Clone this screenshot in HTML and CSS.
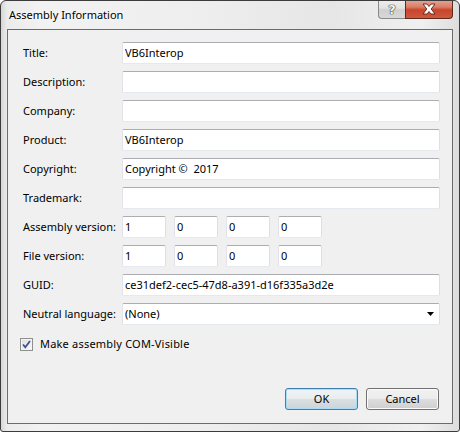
FILE: index.html
```html
<!DOCTYPE html>
<html>
<head>
<meta charset="utf-8">
<link rel="stylesheet" href="styles.css">
</head>
<body>
<div class="window">
  <div class="titlebar">
    <span class="title">Assembly Information</span>
    <div class="caption-btns">
      <div class="cbtn help"><span class="help-glyph">?</span></div>
      <div class="cbtn close">
        <svg width="16" height="12" viewBox="0 0 16 12"><path d="M2 1 H6 L8 3.5 L10 1 H14 L10.2 6 L14 11 H10 L8 8.5 L6 11 H2 L5.8 6 Z" fill="#fff" stroke="#5a2418" stroke-width="0.9" stroke-linejoin="round"/></svg>
      </div>
    </div>
  </div>
  <div class="client">
    <div class="form">
      <label class="lbl">Title:</label><div class="field">VB6Interop</div>
      <label class="lbl">Description:</label><div class="field"></div>
      <label class="lbl">Company:</label><div class="field"></div>
      <label class="lbl">Product:</label><div class="field">VB6Interop</div>
      <label class="lbl">Copyright:</label><div class="field">Copyright ©&nbsp; 2017</div>
      <label class="lbl">Trademark:</label><div class="field"></div>
      <label class="lbl">Assembly version:</label>
      <div class="versions"><div class="field ver">1</div><div class="field ver">0</div><div class="field ver">0</div><div class="field ver">0</div></div>
      <label class="lbl">File version:</label>
      <div class="versions"><div class="field ver">1</div><div class="field ver">0</div><div class="field ver">0</div><div class="field ver">0</div></div>
      <label class="lbl">GUID:</label><div class="field">ce31def2-cec5-47d8-a391-d16f335a3d2e</div>
      <label class="lbl">Neutral language:</label>
      <div class="field combo"><span>(None)</span><svg class="arrow" width="7" height="4" viewBox="0 0 7 4"><path d="M0 0 H7 L3.5 4 Z" fill="#000"/></svg></div>
    </div>
    <div class="check-row">
      <span class="checkbox"><svg width="9" height="9" viewBox="0 0 9 9"><path d="M1 4.5 L3.3 7.2 L8 1" fill="none" stroke="#3d5596" stroke-width="1.8"/></svg></span>
      <span class="check-label">Make assembly COM-Visible</span>
    </div>
    <div class="buttons">
      <button class="btn default">OK</button>
      <button class="btn">Cancel</button>
    </div>
  </div>
</div>
</body>
</html>
```
FILE: styles.css
```css
html, body {
  margin: 0;
  padding: 0;
  background: #ffffff;
}
body {
  font-family: "Noto Sans", "DejaVu Sans", sans-serif;
  font-size: 11px;
  color: #000;
}
.window {
  width: 460px;
  height: 432px;
  box-sizing: border-box;
  border: 1px solid #3c3c3c;
  border-radius: 6px 6px 3px 3px;
  background: linear-gradient(90deg, #d6d6d6 0px, #ebebeb 6px, #f2f2f2 40px, #eeeeee 200px, #e6e6e6 330px, #f0f0f0 420px, #dcdcdc 460px);
  display: flex;
  flex-direction: column;
  padding: 0 6px 7px 6px;
  overflow: hidden;
}
.titlebar {
  height: 28px;
  display: flex;
  align-items: flex-start;
  padding-left: 2px;
}
.title {
  margin-top: 6px;
  font-size: 11px;
  line-height: 16px;
  color: #000;
  text-shadow: 0 0 6px #fff, 0 0 3px #fff;
}
.caption-btns {
  margin-left: auto;
  margin-top: -1px;
  display: flex;
}
.cbtn {
  height: 19px;
  box-sizing: border-box;
  display: flex;
  align-items: center;
  justify-content: center;
}
.help {
  width: 27px;
  border: 1px solid #8a8a8a;
  border-top: none;
  border-right: none;
  border-radius: 0 0 0 4px;
  background: linear-gradient(#eeeeee 0%, #e2e2e2 45%, #cfcfcf 55%, #d8d8d8 100%);
}
.help-glyph {
  font-family: "DejaVu Sans", sans-serif;
  font-weight: bold;
  font-size: 13px;
  line-height: 13px;
  color: #f4f4f4;
  text-shadow: 0 0 1px #333, 0 0 1px #333, 0 0 1px #333;
}
.close {
  width: 48px;
  border: 1px solid #5e2a20;
  border-top: none;
  border-radius: 0 0 4px 0;
  background: linear-gradient(#e8a796 0%, #d97b64 40%, #c8452b 55%, #d0583e 100%);
}
.client {
  flex: 1;
  border: 1px solid #6b6b6b;
  background: #f0f0f0;
  display: flex;
  flex-direction: column;
  padding: 12px 12px 13px 12px;
}
.form {
  display: grid;
  grid-template-columns: 99px 318px;
  grid-auto-rows: 22px;
  row-gap: 7px;
  padding-left: 3px;
  align-items: center;
}
.lbl {
  white-space: nowrap;
  line-height: 16px;
}
.field {
  box-sizing: border-box;
  height: 22px;
  background: #fff;
  border: 1px solid #e3e9ef;
  border-top-color: #abadb3;
  border-left-color: #e2e3ea;
  border-right-color: #dbdfe6;
  border-radius: 2px;
  padding: 0 3px 0 2px;
  line-height: 20px;
  white-space: nowrap;
  overflow: hidden;
}
.versions {
  display: flex;
  gap: 8px;
  height: 22px;
}
.ver {
  width: 44px;
}
.combo {
  display: flex;
  align-items: center;
  justify-content: space-between;
  padding-right: 5px;
}
.arrow {
  display: block;
}
.check-row {
  display: flex;
  align-items: center;
  margin-top: 12px;
  height: 14px;
}
.checkbox {
  box-sizing: border-box;
  width: 13px;
  height: 13px;
  border: 1px solid #8e8f8f;
  background: linear-gradient(135deg, #dcdcdc, #fdfdfd);
  box-shadow: inset 0 0 0 1px #f4f4f4;
  display: flex;
  align-items: center;
  justify-content: center;
}
.checkbox svg {
  display: block;
}
.check-label {
  margin-left: 7px;
  line-height: 16px;
  letter-spacing: 0.2px;
}
.buttons {
  margin-top: auto;
  display: flex;
  justify-content: flex-end;
  gap: 8px;
  padding-right: 1px;
}
.btn {
  width: 73px;
  height: 22px;
  box-sizing: border-box;
  border: 1px solid #707070;
  border-radius: 3px;
  background: linear-gradient(#f2f2f2 0%, #ebebeb 50%, #dddddd 51%, #cfcfcf 100%);
  box-shadow: inset 0 0 0 1px #fbfbfb;
  font-family: "Noto Sans", "DejaVu Sans", sans-serif;
  font-size: 11px;
  color: #000;
  padding: 0;
  line-height: 18px;
}
.btn.default {
  border-color: #3c7fb1;
  box-shadow: inset 0 0 0 1px #a9dcf6;
  background: linear-gradient(#f0f4f7 0%, #e8edf0 50%, #d9dfe3 51%, #cdd4d9 100%);
}
```
